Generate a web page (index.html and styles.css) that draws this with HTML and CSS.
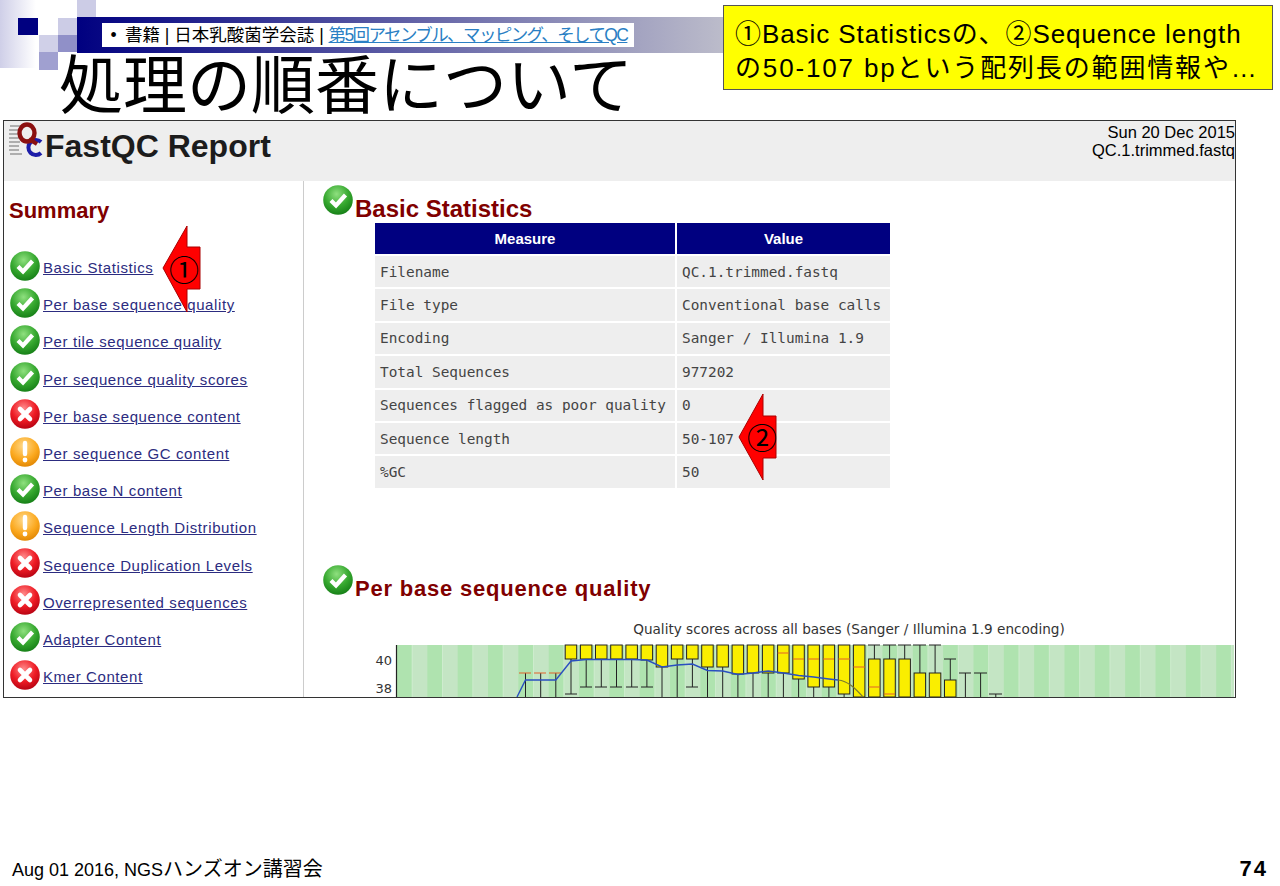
FILE: index.html
```html
<!DOCTYPE html>
<html lang="ja">
<head>
    <meta charset="UTF-8">
    <title>処理の順番について</title>
    <link rel="stylesheet" href="styles.css">
</head>
<body>
    <!-- shared status icons -->
    <svg class="icon-defs" width="0" height="0">
        <defs>
            <radialGradient id="grad-ok" cx="45%" cy="30%" r="75%">
                <stop offset="0" stop-color="#8fe07f"/>
                <stop offset="0.55" stop-color="#36a82f"/>
                <stop offset="1" stop-color="#127a14"/>
            </radialGradient>
            <radialGradient id="grad-err" cx="45%" cy="30%" r="75%">
                <stop offset="0" stop-color="#ff8a8a"/>
                <stop offset="0.55" stop-color="#ee1c25"/>
                <stop offset="1" stop-color="#b00010"/>
            </radialGradient>
            <radialGradient id="grad-warn" cx="45%" cy="30%" r="75%">
                <stop offset="0" stop-color="#ffd98a"/>
                <stop offset="0.6" stop-color="#fba81e"/>
                <stop offset="1" stop-color="#dd8200"/>
            </radialGradient>
            <symbol id="icon-ok" viewBox="0 0 30 30">
                <circle cx="15" cy="15" r="14.8" fill="url(#grad-ok)"/>
                <path d="M8 15.5l5 5 9.5-10.5" fill="none" stroke="#fff" stroke-width="4.2"/>
            </symbol>
            <symbol id="icon-err" viewBox="0 0 30 30">
                <circle cx="15" cy="15" r="14.8" fill="url(#grad-err)"/>
                <path d="M10 10l10 10M20 10l-10 10" fill="none" stroke="#fff" stroke-width="4.6" stroke-linecap="round"/>
            </symbol>
            <symbol id="icon-warn" viewBox="0 0 30 30">
                <circle cx="15" cy="15" r="14.8" fill="url(#grad-warn)"/>
                <path d="M15 6v11" fill="none" stroke="#fff" stroke-width="4.4" stroke-linecap="round"/>
                <circle cx="15" cy="23" r="2.4" fill="#fff"/>
            </symbol>
        </defs>
    </svg>

    <div class="slide">
        <div class="slide-top">
            <span class="sq sq-fade"></span>
            <span class="sq sq-navy"></span>
            <span class="sq sq-a"></span>
            <span class="sq sq-b"></span>
            <span class="sq sq-c"></span>
            <span class="sq sq-d"></span>
            <span class="sq sq-e"></span>
            <span class="sq sq-f"></span>
            <div class="top-bar">
                <div class="crumb">
                    <span class="crumb-dot">•</span>書籍 | 日本乳酸菌学会誌 | <a class="crumb-link">第5回アセンブル、マッピング、そしてQC</a>
                </div>
            </div>
            <h1 class="slide-title">処理の順番について</h1>
        </div>

        <div class="callout">
            <div class="callout-first">①Basic Statisticsの、②Sequence length</div>
            <div class="callout-second">の50-107 bpという配列長の範囲情報や…</div>
        </div>

        <div class="report">
            <div class="report-header">
                <svg class="logo" width="36" height="38" viewBox="0 0 36 38">
                    <path d="M1 4h11M0 8h10M0 12h9M0 16h10M0 20h11M0 24h10M0 28h10M1 32h12" stroke="#999" stroke-width="1.4"/>
                    <path d="M32 20a7.5 7.5 0 1 0 0 11" fill="none" stroke="#1c1ca8" stroke-width="4"/>
                    <ellipse cx="18" cy="11" rx="7.5" ry="8.5" fill="none" stroke="#8b1010" stroke-width="4.4"/>
                    <path d="M20 17l8 5" stroke="#8b1010" stroke-width="4"/>
                </svg>
                <div class="report-title">FastQC Report</div>
                <div class="report-meta">Sun 20 Dec 2015<br>QC.1.trimmed.fastq</div>
            </div>

            <div class="report-body">
                <div class="sidebar">
                    <h2 class="summary-title">Summary</h2>
                    <ul class="module-list">
                        <li><svg class="status"><use href="#icon-ok"/></svg><a>Basic Statistics</a></li>
                        <li><svg class="status"><use href="#icon-ok"/></svg><a>Per base sequence quality</a></li>
                        <li><svg class="status"><use href="#icon-ok"/></svg><a>Per tile sequence quality</a></li>
                        <li><svg class="status"><use href="#icon-ok"/></svg><a>Per sequence quality scores</a></li>
                        <li><svg class="status"><use href="#icon-err"/></svg><a>Per base sequence content</a></li>
                        <li><svg class="status"><use href="#icon-warn"/></svg><a>Per sequence GC content</a></li>
                        <li><svg class="status"><use href="#icon-ok"/></svg><a>Per base N content</a></li>
                        <li><svg class="status"><use href="#icon-warn"/></svg><a>Sequence Length Distribution</a></li>
                        <li><svg class="status"><use href="#icon-err"/></svg><a>Sequence Duplication Levels</a></li>
                        <li><svg class="status"><use href="#icon-err"/></svg><a>Overrepresented sequences</a></li>
                        <li><svg class="status"><use href="#icon-ok"/></svg><a>Adapter Content</a></li>
                        <li><svg class="status"><use href="#icon-err"/></svg><a>Kmer Content</a></li>
                    </ul>
                </div>

                <div class="main">
                    <div class="module-head">
                        <svg class="status"><use href="#icon-ok"/></svg>
                        <h2>Basic Statistics</h2>
                    </div>
                    <table class="stats">
                        <thead>
                            <tr><th>Measure</th><th>Value</th></tr>
                        </thead>
                        <tbody>
                            <tr><td>Filename</td><td>QC.1.trimmed.fastq</td></tr>
                            <tr><td>File type</td><td>Conventional base calls</td></tr>
                            <tr><td>Encoding</td><td>Sanger / Illumina 1.9</td></tr>
                            <tr><td>Total Sequences</td><td>977202</td></tr>
                            <tr><td>Sequences flagged as poor quality</td><td>0</td></tr>
                            <tr><td>Sequence length</td><td>50-107</td></tr>
                            <tr><td>%GC</td><td>50</td></tr>
                        </tbody>
                    </table>

                    <div class="module-head module-head-wide">
                        <svg class="status"><use href="#icon-ok"/></svg>
                        <h2>Per base sequence quality</h2>
                    </div>

                    <svg class="quality-chart" width="875" height="77" viewBox="360 620 875 77">
                        <defs>
                            <pattern id="stripes" x="397" y="0" width="30.34" height="10" patternUnits="userSpaceOnUse">
                                <rect width="15.17" height="10" fill="#afe3af"/>
                                <rect x="15.17" width="15.17" height="10" fill="#c4e5c4"/>
                            </pattern>
                        </defs>
                        <text class="chart-title" x="849" y="634" text-anchor="middle">Quality scores across all bases (Sanger / Illumina 1.9 encoding)</text>
                        <text class="chart-axis" x="392" y="665" text-anchor="end">40</text>
                        <text class="chart-axis" x="392" y="693" text-anchor="end">38</text>
                        <rect x="397" y="645" width="837" height="52" fill="url(#stripes)"/>
                        <path d="M396.5 645V697" stroke="#222" stroke-width="1.2"/>

                        <!-- whiskers -->
                        <path class="whisker" d="M525.5 673V697M540.7 673V697M555.8 673V697
                            M571 659V694M565 694H577
                            M586.2 659V687M580 687H592M601.3 659V687M595 687H607M616.5 659V687M610 687H622
                            M631.7 659V687M626 687H638M646.9 660V687M641 687H653
                            M662 667V697M677.2 659V697M692.4 659V687M686 687H698M707.5 667V697M722.7 667V697
                            M737.9 674V697M753 673V697M768.2 673V697M783.4 673V697M798.6 679V697M813.7 687V697
                            M828.9 687V697M844.1 694V697
                            M874.4 645V659M868 645H880M889.6 645V659M883 645H896M904.7 645V659M898 645H911
                            M919.9 645V673M913 645H926M935.1 645V673M929 645H941M950.3 659V680M944 659H956
                            M965.4 673V697M959 673H971M980.6 673V697M974 673H987M995.8 694V697M989 694H1002"/>
                        <path class="median" d="M519 673H531M534 673H546M549 673H561"/>

                        <!-- boxes -->
                        <g class="boxes">
                            <rect x="565.2" y="645" width="11.5" height="14"/>
                            <rect x="580.4" y="645" width="11.5" height="14"/>
                            <rect x="595.5" y="645" width="11.5" height="14"/>
                            <rect x="610.7" y="645" width="11.5" height="14"/>
                            <rect x="625.9" y="645" width="11.5" height="14"/>
                            <rect x="641.1" y="645" width="11.5" height="15"/>
                            <rect x="656.2" y="645" width="11.5" height="22"/>
                            <rect x="671.4" y="645" width="11.5" height="14"/>
                            <rect x="686.6" y="645" width="11.5" height="14"/>
                            <rect x="701.7" y="645" width="11.5" height="22"/>
                            <rect x="716.9" y="645" width="11.5" height="22"/>
                            <rect x="732.1" y="645" width="11.5" height="29"/>
                            <rect x="747.2" y="645" width="11.5" height="28"/>
                            <rect x="762.4" y="645" width="11.5" height="28"/>
                            <rect x="777.6" y="645" width="11.5" height="28"/>
                            <rect x="792.8" y="645" width="11.5" height="34"/>
                            <rect x="807.9" y="645" width="11.5" height="42"/>
                            <rect x="823.1" y="645" width="11.5" height="42"/>
                            <rect x="838.3" y="645" width="11.5" height="49"/>
                            <rect x="853.4" y="645" width="11.5" height="52"/>
                            <rect x="868.6" y="659" width="11.5" height="38"/>
                            <rect x="883.8" y="659" width="11.5" height="38"/>
                            <rect x="898.9" y="659" width="11.5" height="38"/>
                            <rect x="914.1" y="673" width="11.5" height="24"/>
                            <rect x="929.3" y="673" width="11.5" height="24"/>
                            <rect x="944.5" y="680" width="11.5" height="17"/>
                        </g>
                        <path class="median" d="M777.6 653H789M792.8 659H804M807.9 659H819M823.1 659H834M838.3 659H850M853.4 667H865M868.6 687H880M883.8 694H895"/>
                        <path class="mean" d="M517 697L525.5 680H555.8L571 661L586 659.5H631.7L646.9 660L662 667L677.2 665L692.4 664L707.5 670.5L722.7 671L737.9 674.5L753 673L768.2 671L783.4 673L798.6 675.5L813.7 677L828.9 679L838 680"/>
                        <path class="mean-end" d="M838 680C848 681 855 688 863 697"/>
                    </svg>
                </div>
            </div>
        </div>

        <div class="slide-foot">
            <span>Aug 01 2016, NGS<span class="foot-ja">ハンズオン講習会</span></span>
            <span class="page-num">74</span>
        </div>

        <!-- red annotation arrows over the report -->
        <div class="arrow arrow-one">
            <svg width="40" height="88" viewBox="0 0 40 88"><path d="M1 43L25 1V22H38V64H25V87Z" fill="#f00" stroke="#a00" stroke-width="1"/></svg>
            <span>①</span>
        </div>
        <div class="arrow arrow-two">
            <svg width="40" height="88" viewBox="0 0 40 88"><path d="M1 44L25 1V23H38V65H25V87Z" fill="#f00" stroke="#a00" stroke-width="1"/></svg>
            <span>②</span>
        </div>
    </div>
</body>
</html>
```

FILE: styles.css
```css
html, body {
    margin: 0;
    padding: 0;
}
body {
    background-color: #fff;
    color: #000;
    font-family: "Liberation Sans", "Noto Sans CJK JP", sans-serif;
}
.icon-defs {
    position: absolute;
}
.slide {
    position: relative;
    width: 1280px;
    height: 886px;
    overflow: hidden;
    display: flex;
    flex-direction: column;
}

/* slide header */
.slide-top {
    position: relative;
    height: 120px;
    flex: none;
}
.sq {
    position: absolute;
}
.sq-fade { left: 0; top: 0; width: 36px; height: 68px; background: linear-gradient(to right, #cfcfe8, #fff); }
.sq-navy { left: 18px; top: 18px; width: 20px; height: 17px; background-color: #000080; }
.sq-a { left: 58px; top: 18px; width: 19px; height: 17px; background-color: #ccccE6; }
.sq-b { left: 77px; top: 18px; width: 19px; height: 17px; background-color: #a0a0d0; }
.sq-c { left: 77px; top: 0; width: 19px; height: 18px; background-color: #ccccE6; }
.sq-d { left: 39px; top: 35px; width: 19px; height: 17px; background-color: #d0d0e8; }
.sq-e { left: 58px; top: 35px; width: 19px; height: 17px; background-color: #9090c8; }
.sq-f { left: 39px; top: 52px; width: 19px; height: 18px; background-color: #a0a0d0; }
.top-bar {
    position: relative;
    margin: 17px 0 0 77px;
    width: 660px;
    height: 36px;
    padding: 6px 0 0 25px;
    box-sizing: border-box;
    background: linear-gradient(to right, #000080, #c0c0cc);
}
.crumb {
    width: 532px;
    height: 24px;
    background-color: #fff;
    font-size: 17.5px;
    line-height: 24px;
    white-space: nowrap;
    overflow: hidden;
}
.crumb-dot {
    display: inline-block;
    width: 23px;
    text-align: center;
}
.crumb-link {
    color: #2a7fc4;
    text-decoration: underline;
    letter-spacing: -1.6px;
}
.slide-title {
    position: relative;
    margin: 0 0 0 59px;
    font-size: 64px;
    font-weight: 400;
    line-height: 67px;
    white-space: nowrap;
}
.callout {
    position: absolute;
    left: 723px;
    top: 5px;
    width: 550px;
    height: 85px;
    box-sizing: border-box;
    padding: 11px 0 0 11px;
    background-color: #ff0;
    border: 1px solid #555;
    font-size: 26px;
    line-height: 34px;
    white-space: nowrap;
}
.callout-first {
    letter-spacing: 0.93px;
}
.callout-second {
    letter-spacing: 1.85px;
}

/* report window */
.report {
    flex: none;
    width: 1233px;
    height: 578px;
    margin-left: 3px;
    box-sizing: border-box;
    border: 1px solid #333;
    display: flex;
    flex-direction: column;
    overflow: hidden;
}
.report-header {
    flex: none;
    height: 60px;
    background-color: #eee;
    display: flex;
    align-items: flex-start;
    position: relative;
}
.logo {
    flex: none;
    margin: 1px 0 0 5px;
}
.report-title {
    margin: 6px 0 0 0;
    font-size: 32px;
    font-weight: 700;
    line-height: 38px;
    color: #1c1c1c;
}
.report-meta {
    margin: 2px 0 0 auto;
    font-size: 16.5px;
    line-height: 18px;
    text-align: right;
}
.report-body {
    flex: 1;
    display: flex;
    min-height: 0;
}
.sidebar {
    flex: none;
    width: 300px;
    box-sizing: border-box;
    padding: 17px 0 0 5px;
    border-right: 1px solid #ccc;
}
.summary-title {
    margin: 0 0 23px 0;
    font-size: 22px;
    line-height: 26px;
    color: #800000;
}
.module-list {
    list-style: none;
    margin: 0;
    padding: 0 0 0 1px;
}
.module-list li {
    display: flex;
    align-items: center;
    height: 37.2px;
}
.module-list a {
    margin: 4px 0 0 3px;
    color: #2c2c80;
    text-decoration: underline;
    font-size: 15px;
    letter-spacing: 0.6px;
    white-space: nowrap;
}
.status {
    flex: none;
    width: 30px;
    height: 30px;
}
.main {
    flex: 1;
    min-width: 0;
}
.module-head {
    display: flex;
    align-items: flex-start;
    height: 38px;
    padding: 4px 0 0 19px;
    box-sizing: border-box;
}
.module-head h2 {
    align-self: flex-end;
    margin: 0 0 -4px 2px;
    font-size: 24px;
    line-height: 28px;
    color: #800000;
    white-space: nowrap;
}
.module-head-wide {
    margin-top: 71px;
}
.module-head-wide h2 {
    font-size: 22px;
    letter-spacing: 0.8px;
}
.stats {
    margin: 2px 0 0 69px;
    border-collapse: separate;
    border-spacing: 2px;
    table-layout: fixed;
    width: 519px;
}
.stats th {
    height: 31px;
    padding: 0;
    background-color: #000080;
    color: #fff;
    font-size: 15px;
}
.stats th:first-child {
    width: 300px;
}
.stats td {
    height: 31.4px;
    padding: 0 0 0 5px;
    background-color: #eee;
    color: #444;
    font-family: "DejaVu Sans Mono", monospace;
    font-size: 14.4px;
    white-space: nowrap;
}
.quality-chart {
    display: block;
    margin: 21px 0 0 56px;
}

/* chart parts */
.chart-title {
    font-family: "DejaVu Sans", sans-serif;
    font-size: 13.6px;
    fill: #333;
}
.chart-axis {
    font-family: "DejaVu Sans", sans-serif;
    font-size: 13px;
    fill: #333;
}
.whisker {
    fill: none;
    stroke: #222;
    stroke-width: 1;
}
.boxes rect {
    fill: #faee00;
    stroke: #222;
    stroke-width: 1;
}
.median {
    fill: none;
    stroke: #e2632a;
    stroke-width: 1.2;
}
.mean {
    fill: none;
    stroke: #2a4fc0;
    stroke-width: 1.4;
}
.mean-end {
    fill: none;
    stroke: #7a7a30;
    stroke-width: 1.2;
}

/* footer */
.slide-foot {
    margin-top: auto;
    height: 30px;
    display: flex;
    justify-content: space-between;
    padding: 0 12px 0 12px;
    font-size: 18px;
    line-height: 26px;
}
.foot-ja {
    font-size: 20px;
}
.page-num {
    font-weight: 700;
    font-size: 22px;
    letter-spacing: 2px;
}

/* annotation arrows */
.arrow {
    position: absolute;
    width: 40px;
    height: 88px;
}
.arrow svg {
    display: block;
}
.arrow span {
    position: absolute;
    left: 6px;
    top: 29px;
    width: 32px;
    font-size: 30px;
    line-height: 34px;
    text-align: center;
}
.arrow-one {
    left: 162px;
    top: 225px;
}
.arrow-two {
    left: 738px;
    top: 393px;
}
.arrow-two span {
    left: 8px;
}
```
